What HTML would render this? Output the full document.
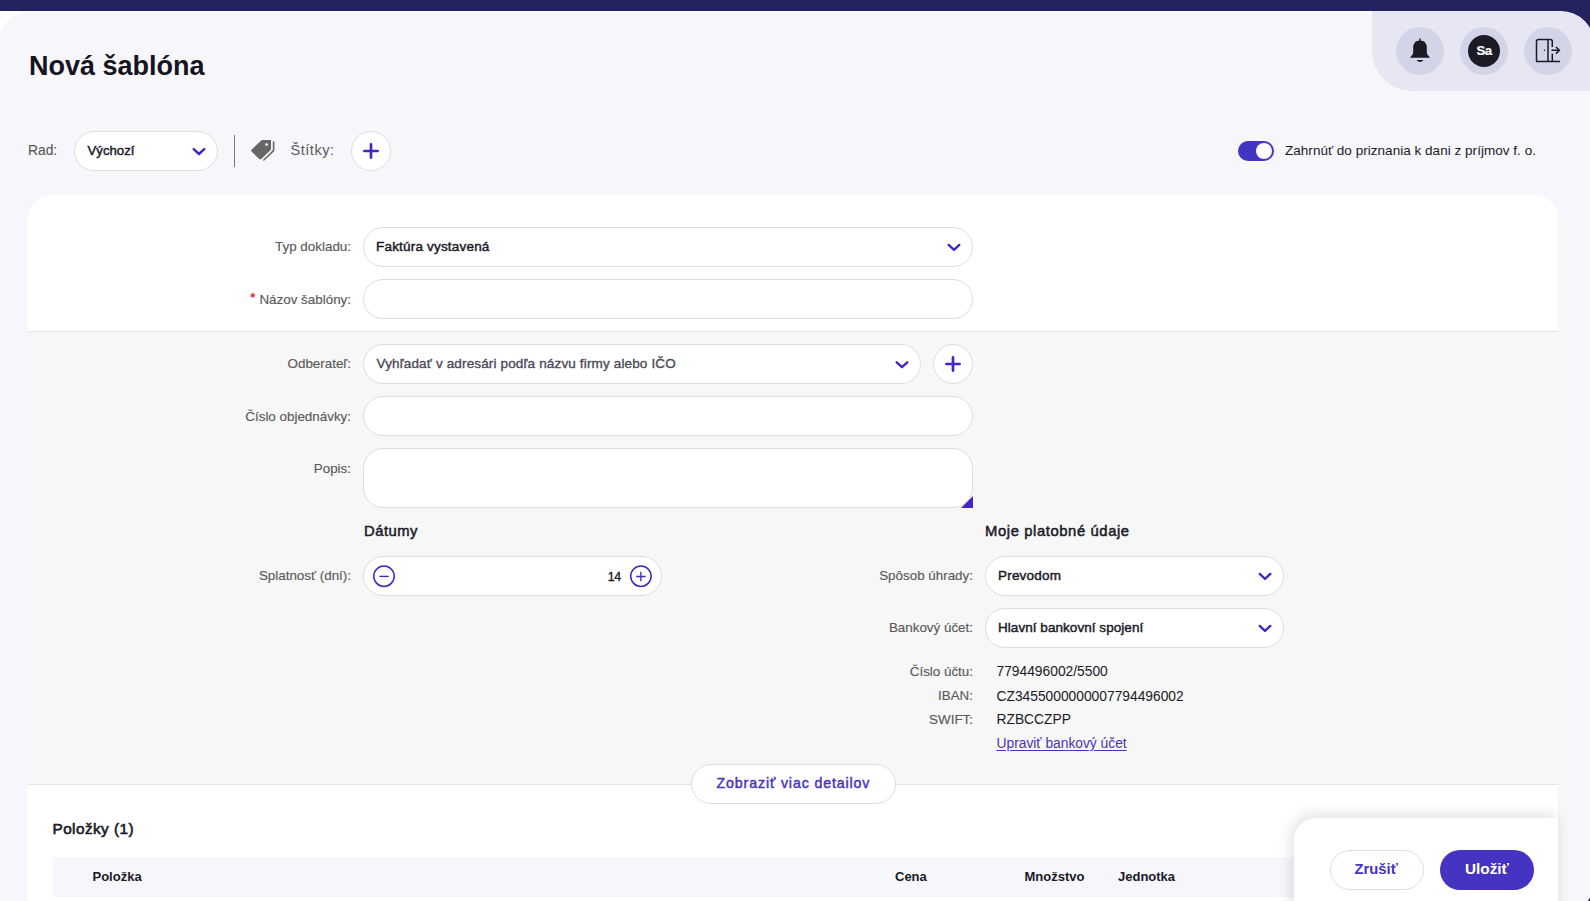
<!DOCTYPE html>
<html><head><meta charset="utf-8">
<style>
*{box-sizing:border-box;margin:0;padding:0}
html,body{width:1590px;height:901px;overflow:hidden}
body{position:relative;background:#25235f;font-family:"Liberation Sans",sans-serif;color:#1a1a28}
.a{position:absolute}
.t{white-space:nowrap;line-height:1}
</style></head>
<body>
<div class="a" style="left:0;top:11px;width:1560px;height:1px;background:#fff"></div>
<div class="a" style="left:0;top:11px;width:60px;height:60px;background:#fff"></div>
<div class="a" style="left:-2px;top:12px;width:1596px;height:902px;background:#f6f6fb;border-radius:32px 32px 32px 0"></div>
<div class="a" style="left:1372px;top:11px;width:222px;height:80px;background:#e7e7f4;border-radius:0 33px 0 40px"></div>
<div class="a" style="left:1396px;top:27px;width:48px;height:48px;border-radius:50%;background:#d4d4e8"></div>
<div class="a" style="left:1460px;top:27px;width:48px;height:48px;border-radius:50%;background:#d4d4e8"></div>
<div class="a" style="left:1524px;top:27px;width:48px;height:48px;border-radius:50%;background:#d4d4e8"></div>
<svg class="a" style="left:1405px;top:35px" width="30" height="30" viewBox="1405 35 30 30">
  <path d="M1420 39 V41.5" stroke="#1b1a25" stroke-width="1.5" stroke-linecap="round"/>
  <path d="M1420 40.6 C1415.6 40.6 1413.2 43.4 1413.2 47.6 V52.2 C1413.2 54.3 1411.6 55.8 1410.4 57 Q1410 57.7 1410.8 57.7 H1429.2 Q1430 57.7 1429.6 57 C1428.4 55.8 1426.8 54.3 1426.8 52.2 V47.6 C1426.8 43.4 1424.4 40.6 1420 40.6 Z" fill="#1b1a25"/>
  <path d="M1416.4 59.9 Q1420 64.2 1423.6 59.9 Z" fill="#1b1a25"/>
</svg>
<div class="a" style="left:1468px;top:35px;width:32px;height:32px;border-radius:50%;background:#1b1a25"></div>
<div class="a t" style="left:1468px;top:43.63px;font-size:13.2px;font-weight:700;color:#fff;-webkit-text-stroke:0.2px #fff;width:32px;text-align:center;letter-spacing:-0.5px;">Sa</div>
<svg class="a" style="left:1532px;top:35px" width="32" height="30" viewBox="1532 35 32 30">
  <path d="M1536.5 61.5 V41.5 Q1536.5 39.5 1538.5 39.5 H1550.3 Q1552.3 39.5 1552.3 41.5 V47" fill="none" stroke="#1b1a25" stroke-width="1.5"/>
  <path d="M1552.3 53.7 V61.5" fill="none" stroke="#1b1a25" stroke-width="1.5"/>
  <path d="M1548 39.5 V61.5" fill="none" stroke="#1b1a25" stroke-width="1.5"/>
  <path d="M1536 61.5 H1560" fill="none" stroke="#1b1a25" stroke-width="1.5"/>
  <path d="M1551.5 50.3 H1559.3 M1556 47 L1559.4 50.3 L1556 53.6" fill="none" stroke="#1b1a25" stroke-width="1.5"/>
  <circle cx="1544.5" cy="50.3" r="0.8" fill="#1b1a25"/>
</svg>
<div class="a t" style="left:29px;top:52.94px;font-size:27px;font-weight:700;color:#15141f;">Nová šablóna</div>
<div class="a t" style="left:28px;top:143.92px;font-size:13.8px;font-weight:400;color:#5a5a5a;-webkit-text-stroke:0.15px #5a5a5a;">Rad:</div>
<div class="a" style="left:74px;top:131px;width:144px;height:40px;border-radius:20px;background:#fff;border:1px solid #dedede;"></div>
<div class="a t" style="left:87.5px;top:143.63px;font-size:13.2px;font-weight:400;color:#1a1a28;-webkit-text-stroke:0.45px #1a1a28;">Výchozí</div>
<div class="a" style="left:234px;top:135px;width:1px;height:32px;background:#777"></div>
<svg class="a" style="left:249px;top:138px" width="28" height="24" viewBox="249 138 28 24">
  <path d="M262 140.6 H270.4 V149.3 L260.8 158.6 Q260.3 159.1 259.8 158.6 L252 151.1 Q251.5 150.6 252 150.1 Z" fill="#666" stroke="#666" stroke-width="1.3" stroke-linejoin="round"/>
  <circle cx="266.6" cy="144.6" r="1.45" fill="#f6f6fb"/>
  <path d="M273.6 142 V150.6 L263.8 160" fill="none" stroke="#666" stroke-width="1.6" stroke-linejoin="round" stroke-linecap="round"/>
</svg>
<div class="a t" style="left:290.5px;top:143.14px;font-size:14.6px;font-weight:400;color:#5a5a5a;letter-spacing:0.5px;">Štítky:</div>
<div class="a" style="left:351px;top:131px;width:40px;height:40px;border-radius:20px;background:#fff;border:1px solid #dedede;"></div>
<div class="a" style="left:1238px;top:141px;width:36px;height:20px;border-radius:10px;background:#4533c1"></div>
<div class="a" style="left:1256px;top:143px;width:16px;height:16px;border-radius:50%;background:#fff"></div>
<div class="a t" style="left:1285px;top:144.07px;font-size:13.5px;font-weight:400;color:#1a1a28;letter-spacing:0.03px;">Zahrnúť do priznania k dani z príjmov f. o.</div>
<div class="a" style="left:28px;top:195px;width:1530px;height:720px;background:#fff;border-radius:24px 24px 0 0"></div>
<div class="a" style="left:28px;top:331px;width:1530px;height:454px;background:#f7f7f7;border-top:1px solid #e4e4e4;border-bottom:1px solid #e4e4e4"></div>
<div class="a t" style="right:1239px;top:239.96px;font-size:13.4px;font-weight:400;color:#5a5a5a;-webkit-text-stroke:0.15px #5a5a5a;">Typ dokladu:</div>
<div class="a" style="left:363px;top:227px;width:610px;height:40px;border-radius:20px;background:#fff;border:1px solid #dedede;"></div>
<div class="a t" style="left:376px;top:239.87px;font-size:13.5px;font-weight:400;color:#1a1a28;-webkit-text-stroke:0.45px #1a1a28;letter-spacing:0.19px;">Faktúra vystavená</div>
<div class="a t" style="left:250.3px;top:290.50px;font-size:13px;font-weight:700;color:#e8262b;">*</div>
<div class="a t" style="right:1239px;top:292.96px;font-size:13.4px;font-weight:400;color:#5a5a5a;-webkit-text-stroke:0.15px #5a5a5a;">Názov šablóny:</div>
<div class="a" style="left:363px;top:279px;width:610px;height:40px;border-radius:20px;background:#fff;border:1px solid #dedede;"></div>
<div class="a t" style="right:1239px;top:357.26px;font-size:13.4px;font-weight:400;color:#5a5a5a;-webkit-text-stroke:0.15px #5a5a5a;">Odberateľ:</div>
<div class="a" style="left:363px;top:344px;width:558px;height:40px;border-radius:20px;background:#fff;border:1px solid #dedede;"></div>
<div class="a t" style="left:376.5px;top:356.87px;font-size:13.5px;font-weight:400;color:#4a4a58;-webkit-text-stroke:0.35px #4a4a58;letter-spacing:0.15px;">Vyhľadať v adresári podľa názvu firmy alebo IČO</div>
<div class="a" style="left:933px;top:344px;width:40px;height:40px;border-radius:20px;background:#fff;border:1px solid #dedede;"></div>
<div class="a t" style="right:1239px;top:409.66px;font-size:13.4px;font-weight:400;color:#5a5a5a;-webkit-text-stroke:0.15px #5a5a5a;">Číslo objednávky:</div>
<div class="a" style="left:363px;top:396px;width:610px;height:40px;border-radius:20px;background:#fff;border:1px solid #dedede;"></div>
<div class="a t" style="right:1239px;top:461.66px;font-size:13.4px;font-weight:400;color:#5a5a5a;-webkit-text-stroke:0.15px #5a5a5a;">Popis:</div>
<div class="a" style="left:363px;top:448px;width:610px;height:60px;border-radius:20px;background:#fff;border:1px solid #dedede;"></div>
<svg class="a" style="left:961px;top:496px" width="12" height="12" viewBox="0 0 12 12"><path d="M12 0 V12 H0 Z" fill="#4426c6"/></svg>
<div class="a t" style="left:364px;top:524.17px;font-size:14.8px;font-weight:400;color:#1a1a28;-webkit-text-stroke:0.5px #1a1a28;letter-spacing:0.5px;">Dátumy</div>
<div class="a t" style="left:985px;top:524.17px;font-size:14.8px;font-weight:400;color:#1a1a28;-webkit-text-stroke:0.5px #1a1a28;letter-spacing:0.6px;">Moje platobné údaje</div>
<div class="a t" style="right:1239px;top:568.66px;font-size:13.4px;font-weight:400;color:#5a5a5a;-webkit-text-stroke:0.15px #5a5a5a;">Splatnosť (dní):</div>
<div class="a" style="left:363px;top:556px;width:299px;height:40px;border-radius:20px;background:#fff;border:1px solid #dedede;"></div>
<div class="a t" style="right:969.2px;top:570.70px;font-size:12.4px;font-weight:400;color:#1a1a28;-webkit-text-stroke:0.35px #1a1a28;letter-spacing:-0.3px;">14</div>
<div class="a t" style="right:617px;top:568.66px;font-size:13.4px;font-weight:400;color:#5a5a5a;-webkit-text-stroke:0.15px #5a5a5a;">Spôsob úhrady:</div>
<div class="a" style="left:985px;top:556px;width:299px;height:40px;border-radius:20px;background:#fff;border:1px solid #dedede;"></div>
<div class="a t" style="left:998px;top:568.57px;font-size:13.5px;font-weight:400;color:#1a1a28;-webkit-text-stroke:0.45px #1a1a28;letter-spacing:0.2px;">Prevodom</div>
<div class="a t" style="right:617px;top:620.66px;font-size:13.4px;font-weight:400;color:#5a5a5a;-webkit-text-stroke:0.15px #5a5a5a;">Bankový účet:</div>
<div class="a" style="left:985px;top:608px;width:299px;height:40px;border-radius:20px;background:#fff;border:1px solid #dedede;"></div>
<div class="a t" style="left:998px;top:620.57px;font-size:13.5px;font-weight:400;color:#1a1a28;-webkit-text-stroke:0.45px #1a1a28;letter-spacing:0.05px;">Hlavní bankovní spojení</div>
<div class="a t" style="right:617px;top:665.46px;font-size:13.4px;font-weight:400;color:#5a5a5a;-webkit-text-stroke:0.15px #5a5a5a;">Číslo účtu:</div>
<div class="a t" style="right:617px;top:688.56px;font-size:13.4px;font-weight:400;color:#5a5a5a;-webkit-text-stroke:0.15px #5a5a5a;">IBAN:</div>
<div class="a t" style="right:617px;top:712.56px;font-size:13.4px;font-weight:400;color:#5a5a5a;-webkit-text-stroke:0.15px #5a5a5a;">SWIFT:</div>
<div class="a t" style="left:996.5px;top:665.32px;font-size:13.8px;font-weight:400;color:#1a1a28;">7794496002/5500</div>
<div class="a t" style="left:996.5px;top:689.52px;font-size:13.8px;font-weight:400;color:#1a1a28;">CZ3455000000007794496002</div>
<div class="a t" style="left:996.5px;top:713.42px;font-size:13.8px;font-weight:400;color:#1a1a28;">RZBCCZPP</div>
<div class="a t" style="left:996.5px;top:737.02px;font-size:13.8px;font-weight:400;color:#4a30c8;text-decoration:underline;text-underline-offset:1.5px;">Upraviť bankový účet</div>
<div class="a" style="left:691px;top:764px;width:205px;height:40px;border-radius:20px;background:#fff;border:1px solid #dedede;"></div>
<div class="a t" style="left:716.5px;top:776.28px;font-size:14.2px;font-weight:400;color:#4533c1;-webkit-text-stroke:0.45px #4533c1;letter-spacing:0.87px;">Zobraziť viac detailov</div>
<div class="a t" style="left:52.5px;top:821.05px;font-size:15.3px;font-weight:400;color:#1a1a28;-webkit-text-stroke:0.6px #1a1a28;letter-spacing:0.45px;">Položky (1)</div>
<div class="a" style="left:52px;top:857px;width:1482px;height:40px;background:#f6f6fb"></div>
<div class="a t" style="left:92.5px;top:870.00px;font-size:13px;font-weight:700;color:#1a1a28;">Položka</div>
<div class="a t" style="left:895px;top:870.00px;font-size:13px;font-weight:700;color:#1a1a28;">Cena</div>
<div class="a t" style="left:1024.5px;top:870.00px;font-size:13px;font-weight:700;color:#1a1a28;">Množstvo</div>
<div class="a t" style="left:1118px;top:870.00px;font-size:13px;font-weight:700;color:#1a1a28;">Jednotka</div>
<svg class="a" style="left:0;top:0" width="1590" height="901" viewBox="0 0 1590 901"><path d="M193.7 149.1 L199 154.0 L204.3 149.1" fill="none" stroke="#4426c6" stroke-width="2.4" stroke-linecap="round" stroke-linejoin="round"/><path d="M371 144.4 V157.6 M364.4 151 H377.6" fill="none" stroke="#4426c6" stroke-width="2.7" stroke-linecap="round"/><path d="M948.7 244.89999999999998 L954 249.79999999999998 L959.3 244.89999999999998" fill="none" stroke="#4426c6" stroke-width="2.4" stroke-linecap="round" stroke-linejoin="round"/><path d="M896.7 362.3 L902 367.20000000000005 L907.3 362.3" fill="none" stroke="#4426c6" stroke-width="2.4" stroke-linecap="round" stroke-linejoin="round"/><path d="M953 357.4 V370.6 M946.4 364 H959.6" fill="none" stroke="#4426c6" stroke-width="2.7" stroke-linecap="round"/><circle cx="384" cy="576.2" r="10.2" fill="none" stroke="#4426c6" stroke-width="1.55"/><path d="M379.4 576.4 H388.7" stroke="#4426c6" stroke-width="1.35"/><circle cx="640.9" cy="576.2" r="10.2" fill="none" stroke="#4426c6" stroke-width="1.55"/><path d="M636.2 576.5 H645.6 M640.9 571.8 V581.2" stroke="#4426c6" stroke-width="1.35"/><path d="M1259.7 573.9000000000001 L1265 578.8000000000001 L1270.3 573.9000000000001" fill="none" stroke="#4426c6" stroke-width="2.4" stroke-linecap="round" stroke-linejoin="round"/><path d="M1259.7 625.9000000000001 L1265 630.8000000000001 L1270.3 625.9000000000001" fill="none" stroke="#4426c6" stroke-width="2.4" stroke-linecap="round" stroke-linejoin="round"/></svg>
<div class="a" style="left:1294px;top:818px;width:264px;height:120px;background:#fff;border-radius:22px 0 0 0;box-shadow:-2px -3px 16px rgba(0,0,0,0.13)"></div>
<div class="a" style="left:1330px;top:850px;width:94px;height:40px;border-radius:20px;background:#fff;border:1px solid #dedede;"></div>
<div class="a t" style="left:1354.5px;top:861.67px;font-size:14.8px;font-weight:700;color:#4533c1;">Zrušiť</div>
<div class="a" style="left:1440px;top:850px;width:94px;height:40px;border-radius:20px;background:#4533c1;"></div>
<div class="a t" style="left:1465px;top:861.25px;font-size:15.3px;font-weight:700;color:#fff;">Uložiť</div>
</body></html>
